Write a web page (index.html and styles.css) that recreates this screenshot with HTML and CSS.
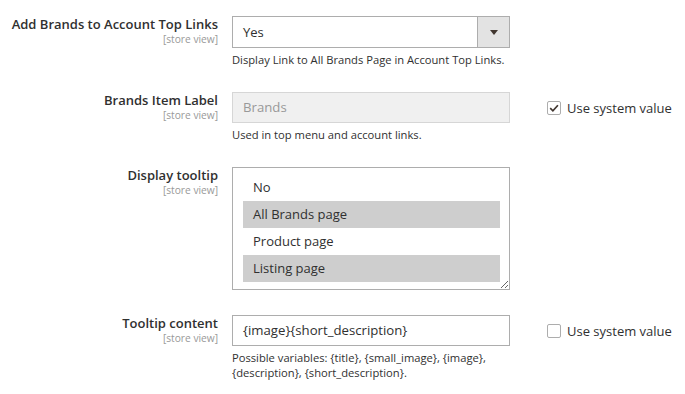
FILE: index.html
```html
<!DOCTYPE html>
<html lang="en">
<head>
<meta charset="utf-8">
<title>Brands config</title>
<link rel="stylesheet" href="styles.css">
</head>
<body>
<div class="form">
  <div class="row">
    <div class="label">
      <span class="title">Add Brands to Account Top Links</span>
      <span class="scope">[store view]</span>
    </div>
    <div class="control">
      <div class="select">
        <span class="value">Yes</span>
        <span class="btn"><span class="arrow"></span></span>
      </div>
      <p class="note">Display Link to All Brands Page in Account Top Links.</p>
    </div>
    <div class="extra"></div>
  </div>

  <div class="row">
    <div class="label">
      <span class="title">Brands Item Label</span>
      <span class="scope">[store view]</span>
    </div>
    <div class="control">
      <div class="input disabled">Brands</div>
      <p class="note">Used in top menu and account links.</p>
    </div>
    <div class="extra">
      <label class="use-default"><span class="checkbox checked"><svg viewBox="0 0 14 14" width="14" height="14"><path d="M3.2 7.2 L5.9 9.8 L10.9 4.2" fill="none" stroke="#41362f" stroke-width="1.7"/></svg></span>Use system value</label>
    </div>
  </div>

  <div class="row">
    <div class="label">
      <span class="title">Display tooltip</span>
      <span class="scope">[store view]</span>
    </div>
    <div class="control">
      <div class="multiselect">
        <div class="option">No</div>
        <div class="option selected">All Brands page</div>
        <div class="option">Product page</div>
        <div class="option selected">Listing page</div>
      </div>
    </div>
    <div class="extra"></div>
  </div>

  <div class="row">
    <div class="label">
      <span class="title">Tooltip content</span>
      <span class="scope">[store view]</span>
    </div>
    <div class="control">
      <div class="input">{image}{short_description}</div>
      <p class="note">Possible variables: {title}, {small_image}, {image}, {description}, {short_description}.</p>
    </div>
    <div class="extra">
      <label class="use-default"><span class="checkbox"></span>Use system value</label>
    </div>
  </div>
</div>
</body>
</html>
```

FILE: styles.css
```css
* { box-sizing: border-box; }
html, body { margin: 0; padding: 0; background: #fff; }
body {
  font-family: "Open Sans", "Liberation Sans", sans-serif;
  color: #303030;
  width: 685px;
  height: 394px;
  overflow: hidden;
}
.form {
  display: flex;
  flex-direction: column;
  gap: 25px;
  padding-top: 16px;
}
.row {
  display: grid;
  grid-template-columns: 218px 278px auto;
  column-gap: 14px;
  align-items: start;
}
.label {
  display: flex;
  flex-direction: column;
  align-items: flex-end;
  text-align: right;
}
.title {
  font-size: 13px;
  font-weight: 600;
  line-height: 16px;
  color: #303030;
}
.scope {
  font-size: 10.2px;
  line-height: 12px;
  color: #999;
  margin-top: 1px;
}
.control { display: flex; flex-direction: column; }
.select {
  height: 32px;
  border: 1px solid #adadad;
  display: flex;
  align-items: stretch;
  background: #fff;
}
.select .value {
  flex: 1;
  font-size: 13px;
  line-height: 30px;
  padding-left: 10px;
}
.select .btn {
  width: 32px;
  background: #e3e3e3;
  border-left: 1px solid #adadad;
  display: flex;
  align-items: center;
  justify-content: center;
}
.arrow {
  width: 0;
  height: 0;
  border-left: 4px solid transparent;
  border-right: 4px solid transparent;
  border-top: 5px solid #41362f;
}
.input {
  height: 31px;
  border: 1px solid #adadad;
  font-size: 13.2px;
  line-height: 29px;
  padding-left: 10px;
  background: #fff;
  color: #303030;
}
.input.disabled {
  background: #f0f0f0;
  border-color: #d6d6d6;
  color: #999;
}
.note {
  margin: 4px 0 0;
  font-size: 11.2px;
  line-height: 15px;
  color: #303030;
}
.multiselect {
  height: 123px;
  border: 1px solid #adadad;
  padding: 6px 9px 6px 10px;
  resize: vertical;
  overflow: auto;
  font-size: 13px;
}
.option {
  height: 27px;
  line-height: 27px;
  padding-left: 10px;
}
.option.selected { background: #cecece; }
.extra {
  padding-left: 23px;
  padding-top: 8px;
}
.use-default {
  display: flex;
  align-items: center;
  gap: 6px;
  font-size: 13px;
  line-height: 16px;
  white-space: nowrap;
}
.checkbox {
  width: 14px;
  height: 14px;
  border: 1px solid #adadad;
  border-radius: 2px;
  background: #fff;
  display: inline-flex;
  align-items: center;
  justify-content: center;
  position: relative;
}
.checkbox svg { position: absolute; left: -1px; top: -1px; }
```
